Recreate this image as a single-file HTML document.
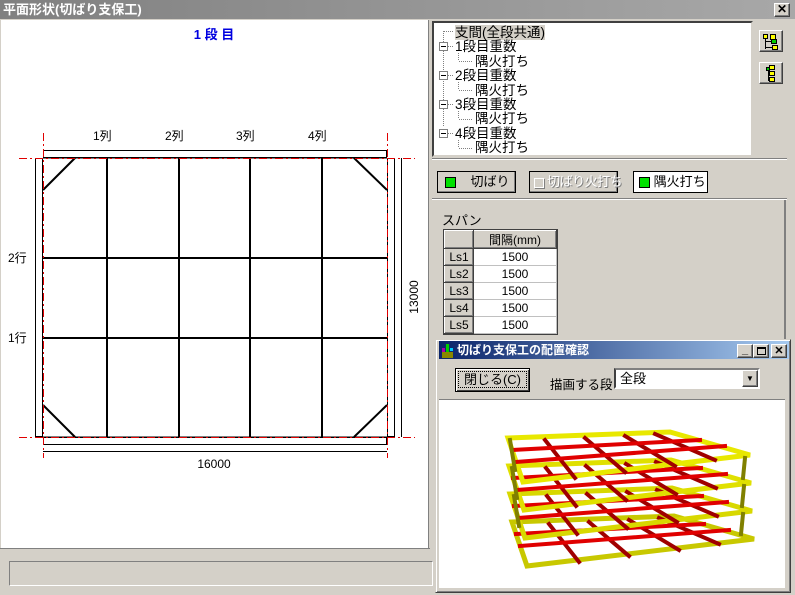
<!DOCTYPE html>
<html><head><meta charset="utf-8"><style>
*{margin:0;padding:0;box-sizing:border-box}
body{width:795px;height:595px;background:#d4d0c8;position:relative;overflow:hidden;font-family:"Liberation Sans","Noto Sans CJK JP",sans-serif;font-size:12px;color:#000}
.a{position:absolute}
.btn{position:absolute;background:#d4d0c8;border:1px solid;border-color:#fff #404040 #404040 #fff;box-shadow:inset -1px -1px #808080}
.sunk{border:1px solid;border-color:#808080 #fff #fff #808080}
.g{display:inline-block;width:11px;height:11px;background:#00e000;border:1px solid #000;vertical-align:middle}
table{border-collapse:collapse}
td{height:17px;font-size:12px}
</style></head><body>
<div class="a" style="left:0;top:0;width:795px;height:19px;background:linear-gradient(90deg,#808080,#a8a8a8);color:#fff;font-weight:bold;font-size:13px;line-height:19px;padding-left:3px">平面形状(切ばり支保工)</div>
<div class="btn" style="left:774px;top:3px;width:16px;height:14px;font-size:12px;line-height:11px;text-align:center;font-weight:bold">✕</div>

<div class="a" style="left:1px;top:20px;width:428px;height:528px;background:#fff;border-right:1px solid #808080">
<svg width="428" height="528" viewBox="1 20 428 528" style="position:absolute;left:0;top:0">
<text x="214" y="39" fill="#0000e0" font-weight="bold" font-size="13" text-anchor="middle">1 段 目</text>
<g font-size="12" fill="#000">
<text x="93" y="140">1列</text><text x="165" y="140">2列</text><text x="236" y="140">3列</text><text x="308" y="140">4列</text>
<text x="8" y="262">2行</text><text x="8" y="342">1行</text>
<text x="214" y="468" text-anchor="middle">16000</text>
<text transform="translate(418,297) rotate(-90)" text-anchor="middle">13000</text>
</g>
<g stroke="#000" fill="none" stroke-width="1">
<rect x="43.5" y="150.5" width="343" height="7"/>
<rect x="35.5" y="158.5" width="7" height="278"/>
<rect x="387.5" y="158.5" width="7" height="278"/>
<rect x="43.5" y="437.5" width="343" height="7"/>
<line x1="401.5" y1="158" x2="401.5" y2="437"/>
<line x1="43" y1="451.5" x2="387" y2="451.5"/>
</g>
<g stroke="#000" stroke-width="2" fill="none">
<line x1="107" y1="158" x2="107" y2="437"/><line x1="179" y1="158" x2="179" y2="437"/>
<line x1="250" y1="158" x2="250" y2="437"/><line x1="322" y1="158" x2="322" y2="437"/>
<line x1="43" y1="258" x2="387" y2="258"/><line x1="43" y1="338" x2="387" y2="338"/>
<line x1="43" y1="190" x2="75" y2="158"/><line x1="354" y1="158" x2="387" y2="190"/>
<line x1="43" y1="405" x2="75" y2="437"/><line x1="354" y1="437" x2="387" y2="405"/>
<line x1="43" y1="158" x2="387" y2="158" stroke-width="1"/><line x1="43" y1="437" x2="387" y2="437" stroke-width="1"/>
</g>
<g stroke="#e00000" stroke-width="1" stroke-dasharray="8,3,2,3" fill="none">
<line x1="19" y1="158.5" x2="415" y2="158.5"/><line x1="19" y1="437.5" x2="415" y2="437.5"/>
<line x1="43.5" y1="133" x2="43.5" y2="458"/><line x1="387.5" y1="133" x2="387.5" y2="458"/>
</g>
</svg></div>
<div class="a" style="left:0;top:548px;width:430px;height:1px;background:#808080"></div>
<div class="a sunk" style="left:9px;top:561px;width:424px;height:25px"></div>

<div class="a" style="left:432px;top:21px;width:321px;height:136px;background:#fff;border:2px solid;border-color:#404040 #d4d0c8 #d4d0c8 #404040;font-size:13.5px;line-height:14.4px">
<div style="position:absolute;left:21px;top:3px">
<div><span style="background:#d4d0c8">支間(全段共通)</span></div>
<div>1段目重数</div><div style="padding-left:20px">隅火打ち</div>
<div>2段目重数</div><div style="padding-left:20px">隅火打ち</div>
<div>3段目重数</div><div style="padding-left:20px">隅火打ち</div>
<div>4段目重数</div><div style="padding-left:20px">隅火打ち</div>
</div>
<svg class="a" style="left:0;top:0" width="60" height="134"><g stroke="#808080" stroke-dasharray="1,1" fill="none">
<line x1="9.5" y1="8" x2="9.5" y2="104"/><line x1="10" y1="8.5" x2="20" y2="8.5"/>
<line x1="14" y1="23.5" x2="20" y2="23.5"/><line x1="14" y1="52.5" x2="20" y2="52.5"/><line x1="14" y1="81.5" x2="20" y2="81.5"/><line x1="14" y1="110.5" x2="20" y2="110.5"/>
<line x1="24.5" y1="30" x2="24.5" y2="38"/><line x1="25" y1="38.5" x2="38" y2="38.5"/>
<line x1="24.5" y1="59" x2="24.5" y2="67"/><line x1="25" y1="67.5" x2="38" y2="67.5"/>
<line x1="24.5" y1="88" x2="24.5" y2="96"/><line x1="25" y1="96.5" x2="38" y2="96.5"/>
<line x1="24.5" y1="117" x2="24.5" y2="125"/><line x1="25" y1="125.5" x2="38" y2="125.5"/></g>
<g fill="#fff" stroke="#808080"><rect x="5.5" y="19.5" width="8" height="8"/><rect x="5.5" y="48.5" width="8" height="8"/><rect x="5.5" y="77.5" width="8" height="8"/><rect x="5.5" y="106.5" width="8" height="8"/></g>
<g stroke="#000"><line x1="7" y1="23.5" x2="12" y2="23.5"/><line x1="7" y1="52.5" x2="12" y2="52.5"/><line x1="7" y1="81.5" x2="12" y2="81.5"/><line x1="7" y1="110.5" x2="12" y2="110.5"/></g></svg>
</div>
<div class="btn" style="left:759px;top:30px;width:24px;height:22px"><svg width="22" height="20"><g stroke="#000"><line x1="5.5" y1="5" x2="5.5" y2="18"/><line x1="5" y1="10.5" x2="12" y2="10.5"/><line x1="5" y1="16.5" x2="12" y2="16.5"/></g><g fill="#ff0" stroke="#000"><rect x="3.5" y="3.5" width="4" height="4"/><rect x="10.5" y="3.5" width="5" height="5"/><rect x="11.5" y="8.5" width="5" height="4" fill="#0c0"/><rect x="12.5" y="14.5" width="5" height="4"/></g></svg></div>
<div class="btn" style="left:759px;top:62px;width:24px;height:22px"><svg width="22" height="20"><g stroke="#000"><line x1="8.5" y1="4" x2="8.5" y2="18"/></g><g fill="#ff0" stroke="#000"><rect x="9.5" y="2.5" width="5" height="4"/><rect x="9.5" y="8.5" width="5" height="4"/><rect x="9.5" y="14.5" width="5" height="4"/><rect x="6.5" y="4.5" width="3" height="3" fill="#0c0"/></g></svg></div>

<div class="a" style="left:432px;top:158px;width:355px;height:2px;border-top:1px solid #808080;border-bottom:1px solid #fff"></div>
<div class="btn" style="left:437px;top:171px;width:79px;height:22px;border-color:#000;line-height:20px;padding-left:7px;white-space:nowrap;font-size:13px"><span class="g"></span>&nbsp;&nbsp;&nbsp;&nbsp;切ばり</div>
<div class="btn" style="left:529px;top:171px;width:89px;height:22px;border-color:#000;line-height:20px;padding-left:4px;color:#fff;text-shadow:1px 1px #808080;white-space:nowrap;font-size:13px;letter-spacing:-0.5px"><span style="display:inline-block;width:10px;height:10px;border:1px solid #fff;vertical-align:middle;box-shadow:1px 1px #808080"></span> 切ばり火打ち</div>
<div class="a" style="left:633px;top:171px;width:75px;height:22px;border:1px solid #000;background:#fff;line-height:20px;padding-left:5px;white-space:nowrap;font-size:13px"><span class="g"></span> 隅火打ち</div>
<div class="a" style="left:432px;top:198px;width:355px;height:2px;border-top:1px solid #808080;border-bottom:1px solid #fff"></div>
<div class="a" style="left:784px;top:200px;width:2px;height:140px;background:#808080"></div>
<div class="a" style="left:442px;top:210px;font-size:13px">スパン</div>
<div class="a" style="left:443px;top:229px;border:1px solid #404040;background:#fff">
<table>
<tr><td class="btn" style="position:static;width:29px"></td><td class="btn" style="position:static;width:83px;text-align:center">間隔(mm)</td></tr>
<tr><td class="btn" style="position:static;text-align:center">Ls1</td><td style="text-align:center;border:1px solid #c0c0c0">1500</td></tr>
<tr><td class="btn" style="position:static;text-align:center">Ls2</td><td style="text-align:center;border:1px solid #c0c0c0">1500</td></tr>
<tr><td class="btn" style="position:static;text-align:center">Ls3</td><td style="text-align:center;border:1px solid #c0c0c0">1500</td></tr>
<tr><td class="btn" style="position:static;text-align:center">Ls4</td><td style="text-align:center;border:1px solid #c0c0c0">1500</td></tr>
<tr><td class="btn" style="position:static;text-align:center">Ls5</td><td style="text-align:center;border:1px solid #c0c0c0">1500</td></tr>
</table></div>

<div class="a" style="left:435px;top:339px;width:356px;height:254px;background:#d4d0c8;border:1px solid;border-color:#d4d0c8 #404040 #404040 #d4d0c8;box-shadow:inset 1px 1px #fff,inset -1px -1px #808080"></div>
<div class="a" style="left:439px;top:341px;width:350px;height:18px;background:linear-gradient(90deg,#0a246a,#a6caf0);color:#fff;font-weight:bold;font-size:12px;line-height:18px;padding-left:18px">切ばり支保工の配置確認</div>
<svg class="a" style="left:441px;top:342px" width="14" height="16"><rect x="1" y="6" width="3" height="4" fill="#a0a"/><rect x="5" y="2" width="3" height="14" fill="#0c0"/><rect x="9" y="6" width="3" height="3" fill="#0cf"/><rect x="1" y="10" width="11" height="6" fill="#880"/></svg>
<div class="btn" style="left:737px;top:344px;width:16px;height:14px;font-size:11px;line-height:10px;text-align:center;font-weight:bold">_</div>
<div class="btn" style="left:753px;top:344px;width:16px;height:14px"><div style="margin:2px 3px;width:9px;height:8px;border:1px solid #000;border-top-width:2px"></div></div>
<div class="btn" style="left:771px;top:344px;width:16px;height:14px;font-size:11px;line-height:12px;text-align:center;font-weight:bold">✕</div>
<div class="a" style="left:439px;top:399px;width:346px;height:1px;background:#808080"></div>
<div class="btn" style="left:455px;top:368px;width:75px;height:24px;border:1px solid #000;box-shadow:inset 1px 1px #fff,inset -1px -1px #404040;text-align:center;line-height:21px;font-size:13px"><span style="outline:1px dotted #000;padding:0 5px">閉じる(C)</span></div>
<div class="a" style="left:550px;top:374px;font-size:12.5px;white-space:nowrap">描画する段</div>
<div class="a" style="left:614px;top:368px;width:146px;height:21px;background:#fff;border:2px solid;border-color:#808080 #fff #fff #404040;padding-left:4px;line-height:17px;font-size:13px">全段</div>
<div class="btn" style="left:742px;top:370px;width:16px;height:17px;text-align:center;font-size:8px;line-height:15px">▼</div>
<div class="a" style="left:439px;top:400px;width:346px;height:188px;background:#fff"></div>
<svg class="a" style="left:0;top:0" width="795" height="595">
<g stroke-linecap="square">
<g transform="translate(4,84)"><polygon points="508,438 670,432 750,455 523,482" fill="none" stroke="#c8c800" stroke-width="5"/><g stroke="#a00000" stroke-width="4"><line x1="545" y1="440" x2="575" y2="478"/><line x1="585" y1="438" x2="625" y2="472"/><line x1="625" y1="436" x2="675" y2="466"/><line x1="655" y1="434" x2="715" y2="460"/></g><g stroke="#e00000" stroke-width="4"><line x1="512" y1="450" x2="700" y2="440"/><line x1="516" y1="462" x2="725" y2="446"/></g></g>
<g transform="translate(2,56)"><polygon points="508,438 670,432 750,455 523,482" fill="none" stroke="#d8d800" stroke-width="5"/><g stroke="#a00000" stroke-width="4"><line x1="545" y1="440" x2="575" y2="478"/><line x1="585" y1="438" x2="625" y2="472"/><line x1="625" y1="436" x2="675" y2="466"/><line x1="655" y1="434" x2="715" y2="460"/></g><g stroke="#e00000" stroke-width="4"><line x1="512" y1="450" x2="700" y2="440"/><line x1="516" y1="462" x2="725" y2="446"/></g></g>
<g transform="translate(1,28)"><polygon points="508,438 670,432 750,455 523,482" fill="none" stroke="#e0e000" stroke-width="5"/><g stroke="#a00000" stroke-width="4"><line x1="545" y1="440" x2="575" y2="478"/><line x1="585" y1="438" x2="625" y2="472"/><line x1="625" y1="436" x2="675" y2="466"/><line x1="655" y1="434" x2="715" y2="460"/></g><g stroke="#e00000" stroke-width="4"><line x1="512" y1="450" x2="700" y2="440"/><line x1="516" y1="462" x2="725" y2="446"/></g></g>
<g><polygon points="508,438 670,432 750,455 523,482" fill="none" stroke="#e8e800" stroke-width="5"/><g stroke="#a00000" stroke-width="4"><line x1="545" y1="440" x2="575" y2="478"/><line x1="585" y1="438" x2="625" y2="472"/><line x1="625" y1="436" x2="675" y2="466"/><line x1="655" y1="434" x2="715" y2="460"/></g><g stroke="#e00000" stroke-width="4"><line x1="512" y1="450" x2="700" y2="440"/><line x1="516" y1="462" x2="725" y2="446"/></g></g>
<g stroke="#808000" stroke-width="4"><line x1="510" y1="440" x2="515" y2="470"/><line x1="512" y1="468" x2="517" y2="498"/><line x1="514" y1="496" x2="519" y2="526"/><line x1="745" y1="458" x2="743" y2="478"/><line x1="744" y1="486" x2="742" y2="506"/><line x1="743" y1="514" x2="741" y2="534"/></g>
</g></svg>
</body></html>
